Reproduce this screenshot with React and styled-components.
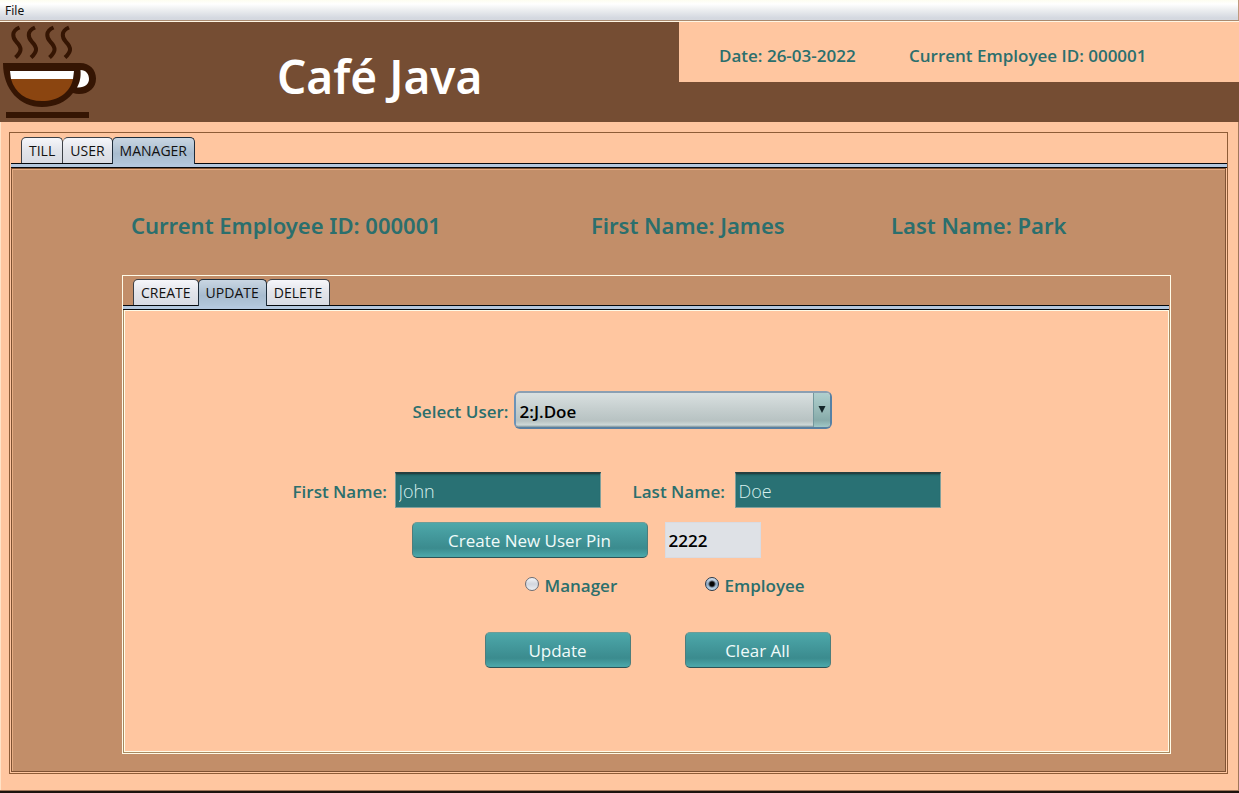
import React, { useState } from "react";
import styled, { createGlobalStyle, css } from "styled-components";

const color = {
  peach: "#ffc6a0",
  tan: "#c28e69",
  brown: "#754d33",
  line: "#8e5c37",
  teal: "#2b6f6d",
  field: "#297174",
};

const GlobalStyle = createGlobalStyle`
  *, *::before, *::after { box-sizing: border-box; }
  body { margin: 0; background: ${color.peach}; }
  body, button, input, select { font-family: "Open Sans", "Noto Sans", sans-serif; }
`;

const Window = styled.div`
  display: flex;
  flex-direction: column;
  min-height: 100vh;
  border-bottom: 2px solid #1c130d;
  background: ${color.peach};
`;

const MenuBar = styled.nav`
  display: flex;
  align-items: center;
  height: 22px;
  padding-left: 5px;
  border-bottom: 1px solid #fff6e4;
  box-shadow: inset 0 -1px 0 #a98a70, inset -1px 0 0 #c09a7c;
  background: linear-gradient(#fdfdf0 0, #ffffff 4px, #eceef0 10px, #d4d8e0 18px, #d6d9df 100%);
`;

const MenuItem = styled.button`
  padding: 0;
  border: 0;
  background: none;
  color: #111;
  font-family: "Noto Sans", sans-serif;
  font-size: 12px;
  line-height: 20px;
`;

const Header = styled.header`
  display: flex;
  height: 100px;
  background: ${color.brown};
`;

const Logo = styled.svg`
  flex: none;
  width: 100px;
  height: 100px;
`;

const Title = styled.h1`
  flex: 1;
  margin: 0;
  padding-left: 177px;
  color: #fff;
  font-family: "Noto Sans", sans-serif;
  font-size: 46px;
  font-weight: 600;
  line-height: 108px;
  white-space: nowrap;
`;

const SessionInfo = styled.div`
  display: grid;
  grid-template-columns: 190px auto;
  justify-content: start;
  align-items: center;
  width: 560px;
  height: 60px;
  padding: 6px 0 0 40px;
  background: ${color.peach};
  color: ${color.teal};
  font-size: 17px;
  font-weight: 600;
  white-space: nowrap;
`;

const Main = styled.main`
  display: flex;
  flex: 1;
  flex-direction: column;
  padding: 10px 10px 16px 9px;
  border: solid #a0765a;
  border-width: 0 1px 1px 0;
  box-shadow: inset 1px 0 0 #ffe2c6;
`;

const Pane = styled.section`
  display: flex;
  flex: 1;
  flex-direction: column;
  border: 1px solid ${(p) => (p.$inner ? "#fffbe8" : color.line)};
`;

const TabStrip = styled.div`
  display: flex;
  padding: ${(p) => (p.$inner ? "3px 0 0 10px" : "4px 0 0 11px")};
`;

const Tab = styled.button`
  height: 26px;
  margin: 0;
  padding: 0 7px;
  border: 1px solid #3c4046;
  border-width: 1px 1px 0 ${(p) => (p.$first ? "1px" : "0")};
  border-radius: 5px 5px 0 0;
  background: linear-gradient(#f6f6fa, #e2e4ea 50%, #d8dbe3);
  color: #111;
  font-size: 14px;
  line-height: 24px;
  white-space: nowrap;
  ${(p) =>
    p.$active &&
    css`
      position: relative;
      height: 27px;
      margin: 0 0 -1px -1px;
      border-color: #1d2c3a;
      border-left-width: 1px;
      background: linear-gradient(#c9d6e2, #a8bccf 60%, #b2c6da);
    `}
`;

const Divider = styled.div`
  height: 5px;
  margin: ${(p) => (p.$inner ? "0 1px 0 0" : "0 0 0 1px")};
  border: solid #05080c;
  border-width: 1px 0;
  background: #b4c8de;
`;

const Panel = styled.div`
  display: flex;
  flex: 1;
  flex-direction: column;
  margin: 0 1px 1px;
  border: 1px solid ${(p) => (p.$inner ? "#fffbe8" : "#7f5233")};
  background: ${(p) => (p.$inner ? color.peach : color.tan)};
  box-shadow: inset 1px 1px 0 ${(p) => (p.$inner ? color.peach : "#e6ad83")};
  outline: 1px solid ${(p) => (p.$inner ? "#a98a60" : color.peach)};
  outline-offset: 0;
  clip-path: inset(0 -1px -1px -1px);
`;

const ManagerBody = styled.div`
  display: flex;
  flex: 1;
  flex-direction: column;
  padding: 35px 54px 17px 110px;
`;

const EmployeeInfo = styled.div`
  display: grid;
  grid-template-columns: 460px 300px auto;
  justify-content: start;
  height: 71px;
  padding-left: 9px;
  color: ${color.teal};
  font-family: "Noto Sans", sans-serif;
  font-size: 22px;
  font-weight: 600;
  line-height: 42px;
  white-space: nowrap;
`;

const Form = styled.form`
  display: flex;
  flex-direction: column;
  width: 708px;
  margin: 0 auto;
  padding: 80px 0;
`;

const Row = styled.div`
  display: flex;
  align-items: center;
  margin-bottom: ${(p) => p.$after || 0}px;
  padding-left: ${(p) => p.$indent || 0}px;
`;

const Label = styled.label`
  flex: none;
  width: ${(p) => p.$width}px;
  padding-top: 4px;
  color: ${color.teal};
  font-size: 17px;
  font-weight: 600;
  line-height: 24px;
  white-space: nowrap;
`;

const SelectBox = styled.div`
  position: relative;
  width: 318px;
  height: 38px;
  border: 2px solid #7593b0;
  border-color: #8b9fb2 #5681a5 #5980a2 #6d93b7;
  border-radius: 6px;
  overflow: hidden;
`;

const Select = styled.select`
  width: 100%;
  height: 100%;
  padding: 3px 24px 0 4px;
  border: 0;
  outline: none;
  appearance: none;
  background: linear-gradient(#d9e0e0, #c6cfcf 45%, #b7c2c2 82%, #ced9d8 94%, #7d939a 100%);
  color: #000;
  font-size: 17px;
  font-weight: 600;
`;

const Arrow = styled.span`
  position: absolute;
  top: 0;
  right: 0;
  bottom: 0;
  display: flex;
  align-items: center;
  justify-content: center;
  width: 17px;
  border-left: 1px solid #74989d;
  background: linear-gradient(#afcfce, #9abcba 45%, #87abaa 80%, #a0c8c6);
  pointer-events: none;
`;

const TextField = styled.input`
  width: 206px;
  height: 36px;
  padding: 0 3px;
  border: 1px solid #7fa09c;
  border-top: 2px solid #253f40;
  border-radius: 0;
  outline: none;
  background: ${color.field};
  box-shadow: inset 0 2px 2px -1px #1c5355;
  color: #d8f0ee;
  font-size: 18px;
  font-weight: 300;
`;

const PinField = styled.input`
  width: 96px;
  height: 36px;
  margin-left: 17px;
  padding: 0 3px;
  border: 1px solid #d9dbe2;
  outline: none;
  background: #dee1e6;
  color: #000;
  font-size: 17px;
  font-weight: 600;
`;

const Button = styled.button`
  width: ${(p) => p.$width}px;
  height: 36px;
  padding: 2px 0 0;
  border: 1px solid;
  border-color: #6d9d98 #4c7d7c #2d5355 #4c7d7c;
  border-radius: 5px;
  background: linear-gradient(#4da8aa, #43989b 40%, #3b8b8e 74%, #4aa5a7 96%);
  color: #f0fbfa;
  font-size: 17px;
  line-height: 32px;
`;

const Choice = styled.label`
  display: flex;
  align-items: center;
  gap: 6px;
  width: 180px;
  color: ${color.teal};
  font-size: 17px;
  font-weight: 600;
  line-height: 24px;
`;

const Radio = styled.input`
  width: 14px;
  height: 14px;
  margin: 0 0 4px;
  border: 1px solid #6a6d75;
  border-radius: 50%;
  appearance: none;
  background: linear-gradient(#f4f5f8, #d2d6de 50%, #eceef2);
  &:checked {
    border-color: #26384a;
    background: radial-gradient(circle, #050505 0 2px, transparent 4px),
      linear-gradient(#d4e0ec, #8fa9c2 50%, #c3dbee);
  }
`;

const Actions = styled(Row)`
  gap: 54px;
`;

function CafeLogo() {
  return (
    <Logo viewBox="0 0 100 100" role="img" aria-label="Coffee cup">
      <g fill="none" stroke="#351503" strokeWidth="4">
        {[0, 15.5, 34, 49.5].map((x) => (
          <path key={x} transform={`translate(${x} 0)`} d="M19.500 5.500 C11.500 9 12 15 16.500 20 C22.500 26 21.500 30 15.500 35.500" />
        ))}
      </g>
      <path d="M3 41 H80 C90 41 96 48 96 56.500 C96 66 89 72 79 72 Q76 72 73 71 C66 80 55 85 42 85 C20 85 3 68 3 41 Z" fill="#351503" />
      <path d="M10 49 H74 L73 57 H11 Z" fill="#fff" />
      <path d="M11 57 H73 C70 71 58 79 42 79 C26 79 15 71 11 57 Z" fill="#8b4510" />
      <path d="M80.500 48 C86 48 89 52 89 57 C89 62 85 66 77 65.500 C80 60 81 55 80.500 48 Z" fill="#fff" />
      <path d="M6 90 H89 V96 H6 Z" fill="#351503" />
    </Logo>
  );
}

function Tabs({ items, active, inner, onSelect }) {
  return (
    <TabStrip $inner={inner} role="tablist">
      {items.map((item, i) => (
        <Tab
          key={item}
          type="button"
          role="tab"
          aria-selected={item === active}
          $first={i === 0}
          $active={item === active}
          onClick={() => onSelect(item)}
        >
          {item}
        </Tab>
      ))}
    </TabStrip>
  );
}

function UpdateForm() {
  return (
    <Form onSubmit={(e) => e.preventDefault()}>
      <Row $indent={120} $after={43}>
        <Label htmlFor="user" $width={101}>Select User:</Label>
        <SelectBox>
          <Select id="user" defaultValue="2">
            <option value="2">2:J.Doe</option>
          </Select>
          <Arrow aria-hidden="true">
            <svg width="8" height="8" viewBox="0 0 8 8">
              <path d="M0.500 0 H7.500 L4 7 Z" fill="#14262a" />
            </svg>
          </Arrow>
        </SelectBox>
      </Row>
      <Row $after={14}>
        <Label htmlFor="first" $width={102}>First Name:</Label>
        <TextField id="first" defaultValue="John" />
        <Row $indent={32}>
          <Label htmlFor="last" $width={102}>Last Name:</Label>
          <TextField id="last" defaultValue="Doe" />
        </Row>
      </Row>
      <Row $indent={119} $after={16}>
        <Button type="button" $width={236}>Create New User Pin</Button>
        <PinField aria-label="User pin" defaultValue="2222" />
      </Row>
      <Row $indent={232} $after={34}>
        <Choice>
          <Radio type="radio" name="role" />
          Manager
        </Choice>
        <Choice>
          <Radio type="radio" name="role" defaultChecked />
          Employee
        </Choice>
      </Row>
      <Actions $indent={192}>
        <Button type="submit" $width={146}>Update</Button>
        <Button type="reset" $width={146}>Clear All</Button>
      </Actions>
    </Form>
  );
}

export default function App() {
  const [section, setSection] = useState("MANAGER");
  const [task, setTask] = useState("UPDATE");
  return (
    <>
      <GlobalStyle />
      <Window>
        <MenuBar>
          <MenuItem type="button">File</MenuItem>
        </MenuBar>
        <Header>
          <CafeLogo />
          <Title>Café Java</Title>
          <SessionInfo>
            <span>Date: 26-03-2022</span>
            <span>Current Employee ID: 000001</span>
          </SessionInfo>
        </Header>
        <Main>
          <Pane>
            <Tabs items={["TILL", "USER", "MANAGER"]} active={section} onSelect={setSection} />
            <Divider />
            <Panel>
              <ManagerBody>
                <EmployeeInfo>
                  <span>Current Employee ID: 000001</span>
                  <span>First Name: James</span>
                  <span>Last Name: Park</span>
                </EmployeeInfo>
                <Pane $inner>
                  <Tabs inner items={["CREATE", "UPDATE", "DELETE"]} active={task} onSelect={setTask} />
                  <Divider $inner />
                  <Panel $inner>
                    <UpdateForm />
                  </Panel>
                </Pane>
              </ManagerBody>
            </Panel>
          </Pane>
        </Main>
      </Window>
    </>
  );
}
